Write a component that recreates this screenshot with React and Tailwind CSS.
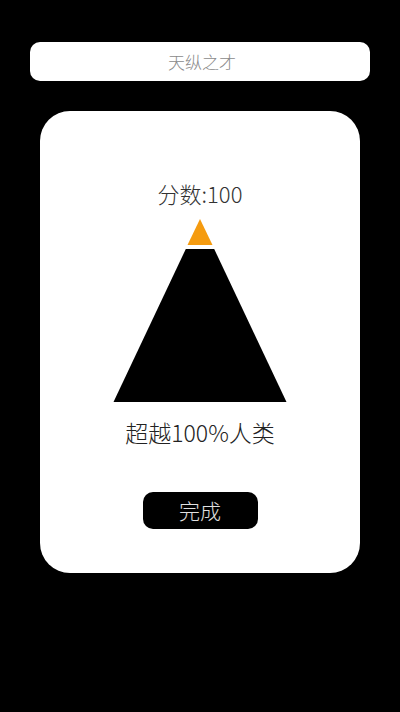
const font = { fontFamily: '"Noto Sans CJK SC", "Noto Sans", sans-serif' };

const Pyramid = () => (
  <svg width="180" height="190" viewBox="0 0 180 190" className="mt-[8px]">
    <polygon points="90,4 102.5,30 77.5,30" fill="#f59b0f" />
    <polygon points="75.8,34 104.2,34 176.5,187 3.5,187" fill="#000" />
  </svg>
);

export default function App() {
  return (
    <div className="w-[400px] h-[712px] bg-black flex flex-col" style={font}>
      <div className="mt-[42px] mx-[30px] h-[39px] bg-white rounded-[10px] flex items-center justify-center">
        <span className="text-[17px] text-[#8a8a8a] font-light pl-[4px]">天纵之才</span>
      </div>
      <div className="mt-[30px] mx-[40px] h-[462px] bg-white rounded-[30px] flex flex-col items-center pt-[68px]">
        <p className="text-[22px] leading-[28px] text-[#333] font-light">分数:100</p>
        <Pyramid />
        <p className="mt-[12px] text-[23px] leading-[30px] text-[#222] font-light">超越100%人类</p>
        <button className="mt-[45px] w-[115px] h-[37px] bg-black rounded-[10px] text-[21px] text-[#e0e0e0] font-light flex items-center justify-center">
          完成
        </button>
      </div>
    </div>
  );
}
